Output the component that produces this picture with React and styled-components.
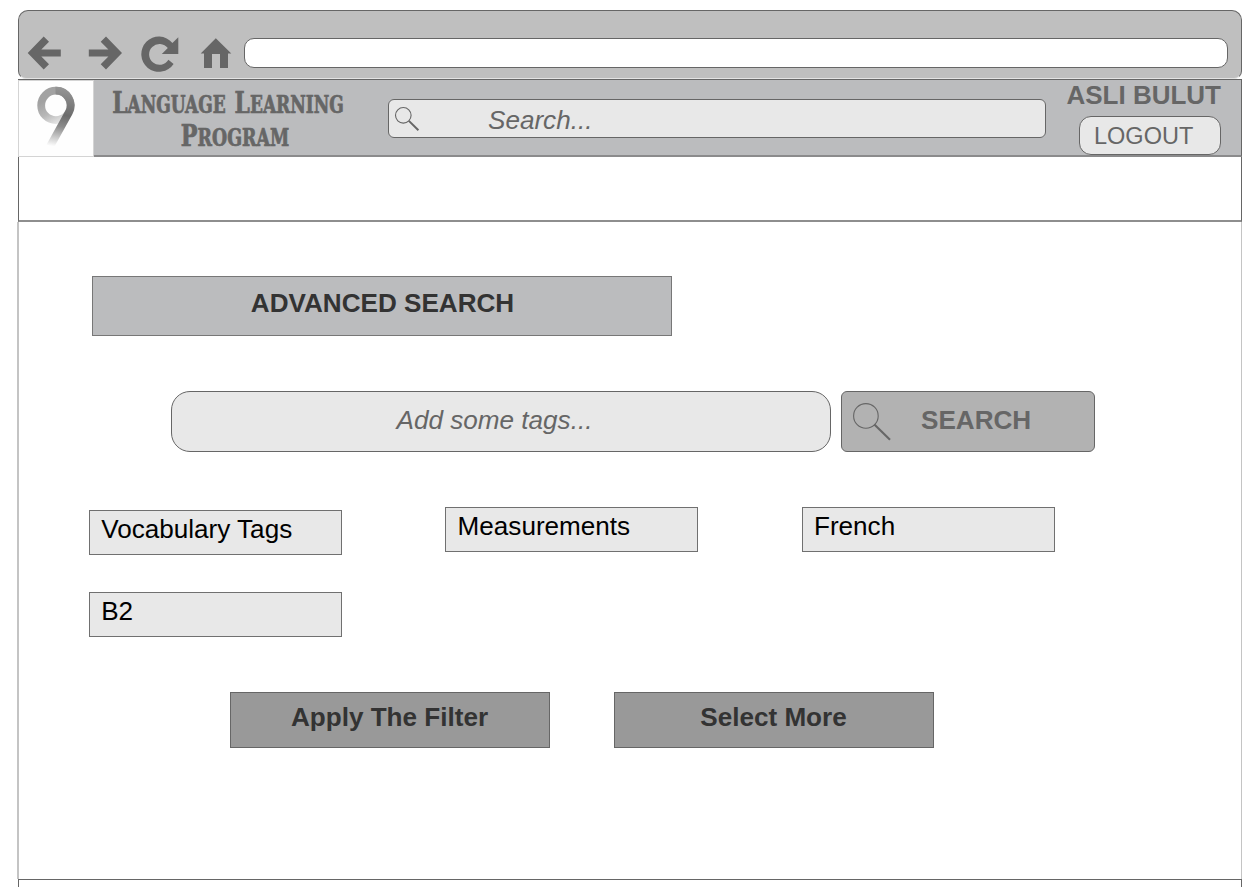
import React from "react";
import styled, { createGlobalStyle } from "styled-components";

const ink = "#666666";

const Global = createGlobalStyle`
  * { box-sizing: border-box; }
  body { margin: 0; background: #fff; font-family: "Liberation Sans", Arial, sans-serif; }
`;

const Page = styled.main`
  width: 1252px;
  height: 887px;
  padding: 10px 10px 0 17px;
  overflow: hidden;
  display: flex;
  flex-direction: column;
`;

const BrowserBar = styled.div`
  height: 69px;
  margin-left: 1px;
  flex: none;
  display: flex;
  align-items: flex-start;
  padding: 0 13px 0 0;
  background: #bfbfbf;
  border: 1px solid ${ink};
  border-bottom-color: #e3e3e3;
  border-radius: 10px 10px 8px 8px;
`;

const NavIcons = styled.svg`
  flex: none;
  width: 225px;
  height: 67px;
  fill: ${ink};
`;

const AddressField = styled.div`
  flex: 1;
  height: 30px;
  margin-top: 27px;
  background: #fff;
  border: 1px solid ${ink};
  border-radius: 10px;
`;

const Header = styled.header`
  flex: none;
  height: 78px;
  margin-left: 1px;
  display: flex;
  background: #bbbcbe;
  border: 1px solid ${ink};
  border-left: 0;
  border-bottom: 2px solid #8b8b8c;
`;

const Logo = styled.svg`
  flex: none;
  width: 76px;
  height: 77px;
  background: #fefefe;
`;

const Brand = styled.div`
  width: 294px;
  flex: none;
  padding: 8px 0 0 1px;
`;

const BrandLine = styled.div`
  width: 400px;
  margin-left: ${(p) => p.$shift}px;
  text-align: center;
  font: bold 23.4px/32px "DejaVu Serif Condensed", "DejaVu Serif", serif;
  color: ${ink};
  -webkit-text-stroke: 0.7px ${ink};
  text-transform: uppercase;
  transform: scaleX(${(p) => p.$squeeze});
`;

const Word = styled.span`
  display: inline-block;
  line-height: 32px;
  & + & { margin-left: 11px; }
  &::first-letter { font-size: 30px; line-height: 30px; }
`;

const HeaderSearch = styled.div`
  width: 658px;
  height: 39px;
  margin-top: 19px;
  flex: none;
  display: flex;
  background: #e8e8e8;
  border: 1px solid ${ink};
  border-radius: 6px;
`;

const Placeholder = styled.span`
  font-style: italic;
  font-size: 26.1px;
  line-height: 30px;
  white-space: pre;
  color: ${ink};
`;

const HeaderPlaceholder = styled(Placeholder)`
  padding: 5px 0 0 68px;
`;

const Glass = styled.svg`
  flex: none;
  width: ${(p) => p.$size}px;
  height: ${(p) => p.$size}px;
  margin: ${(p) => p.$margin};
  fill: none;
  stroke: ${ink};
`;

const Account = styled.div`
  flex: 1;
  display: flex;
  flex-direction: column;
  align-items: flex-end;
  padding-right: 20px;
`;

const UserName = styled.div`
  font-size: 26px;
  font-weight: bold;
  line-height: 30px;
  height: 36px;
  color: ${ink};
`;

const Logout = styled.div`
  flex: none;
  width: 142px;
  height: 39px;
  padding: 5px 0 0 14px;
  font-size: 23.5px;
  line-height: 28px;
  color: ${ink};
  background: #e8e8e8;
  border: 1px solid ${ink};
  border-radius: 12px;
`;

const SubBar = styled.div`
  flex: none;
  height: 65px;
  margin-left: 1px;
  border: 1px solid ${ink};
  border-top: 0;
  border-bottom: 2px solid #8e8e8e;
`;

const Content = styled.section`
  flex: none;
  height: 657px;
  padding: 54px 0 0 70px;
  border: solid #c4c4c4;
  border-width: 0 1px 0 2px;
`;

const Title = styled.h1`
  width: 580px;
  height: 60px;
  margin: 0 0 55px 3px;
  padding: 11px 0 0 1px;
  text-align: center;
  font-size: 26.1px;
  line-height: 30px;
  color: #333;
  background: #bbbcbe;
  border: 1px solid #777;
`;

const SearchRow = styled.div`
  display: flex;
  gap: 10px;
  margin: 0 0 55px 82px;
`;

const TagInput = styled.div`
  width: 660px;
  height: 61px;
  padding: 13px 13px 0 0;
  text-align: center;
  background: #e8e8e8;
  border: 1px solid ${ink};
  border-radius: 19px;
`;

const SearchButton = styled.div`
  width: 254px;
  height: 61px;
  display: flex;
  background: #b2b2b2;
  border: 1px solid ${ink};
  border-radius: 6px;
`;

const SearchLabel = styled.span`
  padding: 13px 0 0 30px;
  font-size: 26.1px;
  font-weight: bold;
  line-height: 30px;
  color: ${ink};
`;

const TagGrid = styled.div`
  display: grid;
  grid-template-columns: repeat(3, 253px);
  column-gap: 103.4px;
  row-gap: 37px;
  align-items: start;
`;

const Tag = styled.div`
  height: 45px;
  margin-top: ${(p) => (p.$lowered ? 3 : 0)}px;
  padding: 3px 0 0 11.2px;
  font-size: 26.1px;
  line-height: 30px;
  color: #000;
  background: #e8e8e8;
  border: 1px solid #707070;
`;

const Actions = styled.div`
  display: flex;
  gap: 64px;
  margin: 55px 0 0 140.5px;
`;

const ActionButton = styled.div`
  width: 320px;
  height: 56px;
  padding-top: 9px;
  text-align: center;
  font-size: 26.1px;
  font-weight: bold;
  line-height: 30px;
  color: #333;
  background: #999;
  border: 1px solid #666;
`;

const Footer = styled.footer`
  flex: none;
  height: 20px;
  margin-left: 1px;
  border: 1px solid ${ink};
`;

export default function App() {
  return (
    <Page>
      <Global />
      <BrowserBar>
        <NavIcons viewBox="19 11 225 67">
          <path d="M27.7 53 43.7 36.6 49 41.8 41.3 49.6H60.8V56.4H41.3L49 64.2 43.7 69.4Z" />
          <path d="M122 53 106 36.6 100.7 41.8 108.4 49.6H88.8V56.4H108.4L100.7 64.2 106 69.4Z" />
          <path d="M178.3 37.3V54H161.8L167.8 48.1A10.4 10.4 0 1 0 168.4 59.8L173.6 63.9A17.6 17.6 0 1 1 172.4 42.9Z" />
          <path d="M215.8 38.2 231.3 53.5H228V67.9H220V54H212V67.9H204V53.5H200.7Z" />
        </NavIcons>
        <AddressField />
      </BrowserBar>
      <Header>
        <Logo viewBox="18 80 76 77">
          <defs>
            <linearGradient id="loop" x1="46" y1="100" x2="58" y2="125" gradientUnits="userSpaceOnUse">
              <stop offset="0" stopColor="#a2a2a2" />
              <stop offset="0.5" stopColor="#b8b8b8" />
              <stop offset="1" stopColor="#ececec" />
            </linearGradient>
            <linearGradient id="stem" x1="60" y1="88" x2="51" y2="146" gradientUnits="userSpaceOnUse">
              <stop offset="0" stopColor="#949494" />
              <stop offset="0.45" stopColor="#6c6c6c" />
              <stop offset="0.65" stopColor="#8c8c8c" />
              <stop offset="1" stopColor="#fefefe" />
            </linearGradient>
          </defs>
          <rect x="18.5" y="80.5" width="75" height="76" fill="none" stroke="#d4d4d4" />
          <g fill="none" strokeWidth="7.8">
            <circle cx="55.9" cy="105.4" r="14.7" stroke="url(#loop)" />
            <path d="M55.5 90.7A14.7 14.7 0 0 1 68.8 112.5L50 146.5" stroke="url(#stem)" />
          </g>
        </Logo>
        <Brand>
          <BrandLine $shift={-67} $squeeze={0.808}>
            <Word>Language</Word>
            <Word>Learning</Word>
          </BrandLine>
          <BrandLine $shift={-60.5} $squeeze={0.825}>
            <Word>Program</Word>
          </BrandLine>
        </Brand>
        <HeaderSearch>
          <Glass $size={26} $margin="6px 0 0 5px" viewBox="0 0 26 26">
            <circle cx="9.3" cy="9.3" r="7.8" strokeWidth="1.1" />
            <path d="M14.9 14.9 24.4 24.2" strokeWidth="2" />
          </Glass>
          <HeaderPlaceholder>Search...</HeaderPlaceholder>
        </HeaderSearch>
        <Account>
          <UserName>ASLI BULUT</UserName>
          <Logout>LOGOUT</Logout>
        </Account>
      </Header>
      <SubBar />
      <Content>
        <Title>ADVANCED SEARCH</Title>
        <SearchRow>
          <TagInput>
            <Placeholder>Add some tags...</Placeholder>
          </TagInput>
          <SearchButton>
            <Glass $size={39} $margin="10px 0 0 10px" viewBox="0 0 39 39">
              <circle cx="13.9" cy="13.9" r="12.3" strokeWidth="1.1" />
              <path d="M22.4 22.5 38 37.8" strokeWidth="2.1" />
            </Glass>
            <SearchLabel>SEARCH</SearchLabel>
          </SearchButton>
        </SearchRow>
        <TagGrid>
          <Tag $lowered>Vocabulary Tags</Tag>
          <Tag>Measurements</Tag>
          <Tag>French</Tag>
          <Tag>B2</Tag>
        </TagGrid>
        <Actions>
          <ActionButton>Apply The Filter</ActionButton>
          <ActionButton>Select More</ActionButton>
        </Actions>
      </Content>
      <Footer />
    </Page>
  );
}
